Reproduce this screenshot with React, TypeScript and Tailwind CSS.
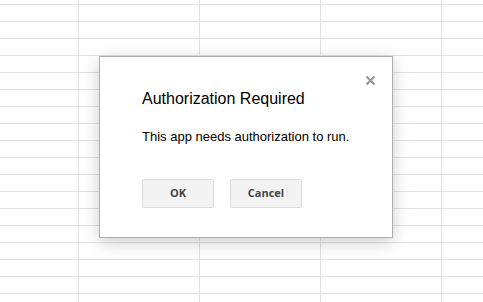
const ROWS = Array.from({ length: 18 })
const COLS = [78, 121, 121, 121, 121]

function Sheet() {
  return (
    <div className="absolute inset-0 overflow-hidden bg-white">
      <div className="flex flex-col pt-[4px]">
        {ROWS.map((_, i) => (
          <div key={i} className="h-[17px] shrink-0 border-t border-[#e2e2e2]" />
        ))}
      </div>
      <div className="absolute inset-0 flex">
        {COLS.map((w, i) => (
          <div key={i} className="h-full shrink-0 border-r border-[#e2e2e2]" style={{ width: i === 0 ? w + 1 : w }} />
        ))}
      </div>
    </div>
  )
}

export default function App() {
  return (
    <div className="relative h-[302px] w-[483px] overflow-hidden font-['Liberation_Sans',Arial,sans-serif]">
      <Sheet />
      <div className="absolute left-[99px] top-[56px] h-[182px] w-[294px] border border-[#acacac] bg-white shadow-[0_4px_16px_rgba(0,0,0,0.2)]">
        <button className="absolute left-[264px] top-[17px] flex h-[12px] w-[12px] items-center justify-center">
          <svg width="11" height="11" viewBox="0 0 11 11">
            <path d="M1.5 1.5 L9.5 9.5 M9.5 1.5 L1.5 9.5" stroke="#999" strokeWidth="2.2" />
          </svg>
        </button>
        <div className="pl-[42px] pt-[32px]">
          <h1 className="text-[16px] leading-[20px] text-black">Authorization Required</h1>
          <p className="mt-[20px] text-[13px] leading-[16px] text-black">This app needs authorization to run.</p>
          <div className="mt-[34px] flex gap-[16px]">
            <button className="h-[29px] w-[72px] rounded-[2px] border border-[#dcdcdc] bg-[#f3f3f3] font-['Open_Sans',sans-serif] text-[11px] font-bold text-[#444]">
              OK
            </button>
            <button className="h-[29px] w-[72px] rounded-[2px] border border-[#dcdcdc] bg-[#f3f3f3] font-['Open_Sans',sans-serif] text-[11px] font-bold text-[#444]">
              Cancel
            </button>
          </div>
        </div>
      </div>
    </div>
  )
}
